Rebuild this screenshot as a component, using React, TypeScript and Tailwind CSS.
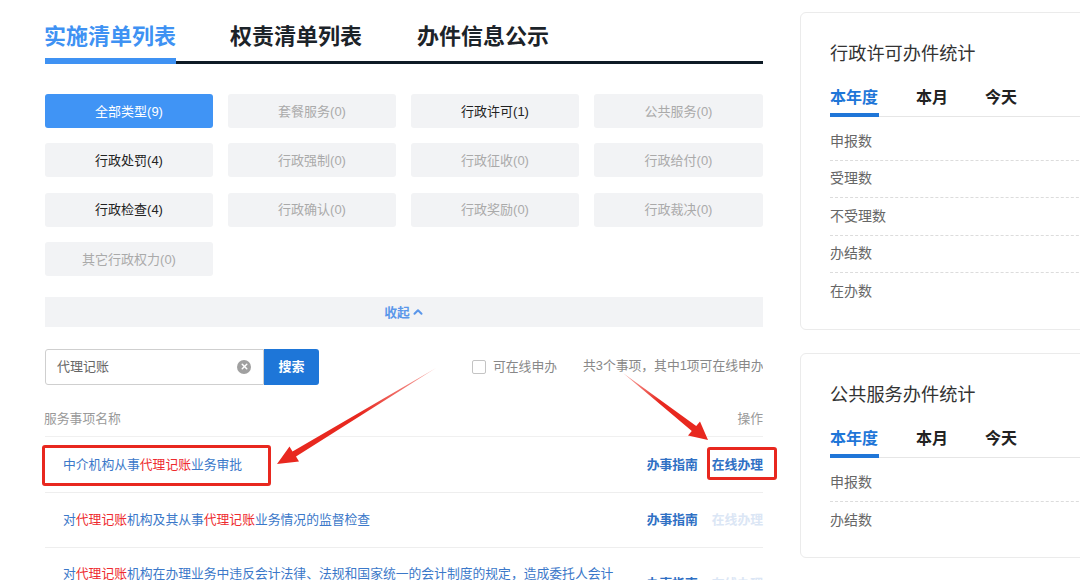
import React from "react";
import { ChevronUp, X } from "lucide-react";

const types = [
  { label: "全部类型(9)", state: "active" },
  { label: "套餐服务(0)", state: "off" },
  { label: "行政许可(1)", state: "on" },
  { label: "公共服务(0)", state: "off" },
  { label: "行政处罚(4)", state: "on" },
  { label: "行政强制(0)", state: "off" },
  { label: "行政征收(0)", state: "off" },
  { label: "行政给付(0)", state: "off" },
  { label: "行政检查(4)", state: "on" },
  { label: "行政确认(0)", state: "off" },
  { label: "行政奖励(0)", state: "off" },
  { label: "行政裁决(0)", state: "off" },
  { label: "其它行政权力(0)", state: "off" },
];

function Hl() {
  return <span className="text-[#ee2b2f]">代理记账</span>;
}

function Actions({ online }: { online?: boolean }) {
  return (
    <div className="ml-auto flex shrink-0 gap-[14px] text-[12.8px] font-bold">
      <span className="text-[#2f70c4]">办事指南</span>
      <span className={online ? "text-[#2f70c4]" : "text-[#dbe6f5]"}>在线办理</span>
    </div>
  );
}

function StatCard({ title, rows, className }: { title: string; rows: string[]; className: string }) {
  return (
    <div className={`w-[320px] rounded-[6px] border border-[#ebebeb] pl-[29px] pt-[27px] ${className}`}>
      <h2 className="text-[18.2px] leading-[28px] text-[#333]">{title}</h2>
      <div className="mt-[17px] flex h-[32px] border-b border-[#e6e6e6] pt-[1px] text-[16px] font-bold leading-[24px] text-[#222]">
        <span className="-mt-[1px] h-[32px] w-[49px] shrink-0 border-b-[4px] border-[#1f76d8] pt-[1px] text-[#1f76d8]">本年度</span>
        <span className="ml-[37px]">本月</span>
        <span className="ml-[37px]">今天</span>
      </div>
      <div className="mt-[6px]">
        {rows.map((r, i) => (
          <div
            key={r}
            className={`flex h-[37.5px] items-center text-[14px] text-[#666] ${
              i < rows.length - 1 ? "border-b border-dashed border-[#dcdcdc]" : ""
            }`}
          >
            {r}
          </div>
        ))}
      </div>
    </div>
  );
}

export default function App() {
  return (
    <div
      className="relative flex h-[580px] w-[1080px] overflow-hidden bg-white"
      style={{ fontFamily: '"Liberation Sans", "Noto Sans CJK SC", sans-serif' }}
    >
      {/* 左侧列表 */}
      <div className="ml-[45px] w-[718px] shrink-0">
        <div className="flex h-[64px] border-b-[3px] border-[#0e1b26] text-[22px] font-bold leading-[30px] text-[#1c2329]">
          <div className="-mb-[3px] h-[64px] w-[131px] whitespace-nowrap border-b-[6px] border-[#3f92f3] pt-[22px] indent-[-1px] text-[#3f92f3]">
            实施清单列表
          </div>
          <div className="ml-[54px] whitespace-nowrap pt-[22px]">权责清单列表</div>
          <div className="ml-[55px] whitespace-nowrap pt-[22px]">办件信息公示</div>
        </div>

        <div className="mt-[30px] grid grid-cols-[168px_168px_168px_169px] gap-x-[15px] gap-y-[15.3px]">
          {types.map((t) => (
            <div
              key={t.label}
              className={`flex h-[34px] items-center justify-center rounded-[3px] pt-[1px] text-[13px] ${
                t.state === "active"
                  ? "bg-[#4094f5] text-white"
                  : t.state === "on"
                    ? "bg-[#f2f3f5] text-[#222]"
                    : "bg-[#f2f3f5] text-[#aaa]"
              }`}
            >
              {t.label}
            </div>
          ))}
        </div>

        <div className="mt-[21px] flex h-[30px] items-center justify-center gap-[1px] bg-[#f2f3f5] pl-[1px] pt-[1px] text-[12.8px] font-bold text-[#5b97ea]">
          收起
          <ChevronUp size={14} strokeWidth={3.5} />
        </div>

        <div className="mt-[22px] flex h-[36px] items-center">
          <div className="flex h-[36px] w-[219px] items-center justify-between rounded-l-[3px] border border-[#cfcfcf] pl-[11px] pr-[12px] text-[13px] text-[#666]">
            代理记账
            <span className="flex h-[14px] w-[14px] items-center justify-center rounded-full bg-[#a0a0a0]">
              <X size={9} strokeWidth={4} color="#fff" />
            </span>
          </div>
          <div className="flex h-[36px] w-[55px] items-center justify-center rounded-r-[3px] bg-[#1e76d8] text-[13px] font-bold text-white">
            搜索
          </div>
          <span className="ml-[153px] h-[14px] w-[14px] rounded-[2px] border border-[#c4c4c4]" />
          <span className="ml-[7px] text-[12.8px] text-[#888]">可在线申办</span>
          <div className="ml-auto w-[180px] overflow-hidden whitespace-nowrap pb-[3px] text-[12.8px] text-[#888]">
            共3个事项，其中1项可在线申办
          </div>
        </div>

        <div className="mt-[15px] flex h-[37px] items-center border-b border-[#f0f0f0] pt-[1px] text-[12.8px] text-[#999]">
          <span className="-ml-[1px]">服务事项名称</span>
          <span className="ml-auto">操作</span>
        </div>
        <div className="flex h-[56px] items-center border-b border-[#eeeeee] pl-[18px] text-[12.8px] text-[#3b78c9]">
          <span>
            中介机构从事
            <Hl />
            业务审批
          </span>
          <Actions online />
        </div>
        <div className="flex h-[55px] items-center border-b border-[#eeeeee] pl-[18px] text-[12.8px] text-[#3b78c9]">
          <span>
            对<Hl />
            机构及其从事
            <Hl />
            业务情况的监督检查
          </span>
          <Actions />
        </div>
        <div className="flex h-[72px] items-center pl-[18px] text-[12.8px] text-[#3b78c9]">
          <span className="self-start whitespace-nowrap pt-[16px]">
            对<Hl />
            机构在办理业务中违反会计法律、法规和国家统一的会计制度的规定，造成委托人会计
          </span>
          <Actions />
        </div>
      </div>

      {/* 右侧统计 */}
      <div className="ml-[37px] shrink-0 pt-[12px]">
        <StatCard title="行政许可办件统计" rows={["申报数", "受理数", "不受理数", "办结数", "在办数"]} className="h-[318px]" />
        <StatCard title="公共服务办件统计" rows={["申报数", "办结数"]} className="mt-[23px] h-[205px]" />
      </div>

      {/* 标注：红框和箭头 */}
      <div className="absolute left-[42px] top-[445px] h-[41px] w-[229px] rounded-[3px] border-[3px] border-[#e8281f]" />
      <div className="absolute left-[707px] top-[447px] h-[33px] w-[70px] rounded-[3px] border-[3px] border-[#e8281f]" />
      <svg className="pointer-events-none absolute left-0 top-0" width="1080" height="580">
        <defs>
          <linearGradient id="a1" gradientUnits="userSpaceOnUse" x1="436" y1="368" x2="360" y2="414">
            <stop offset="0" stopColor="#f7b0ac" />
            <stop offset="1" stopColor="#e8281f" />
          </linearGradient>
          <linearGradient id="a2" gradientUnits="userSpaceOnUse" x1="623" y1="373" x2="660" y2="402">
            <stop offset="0" stopColor="#f7b0ac" />
            <stop offset="1" stopColor="#e8281f" />
          </linearGradient>
        </defs>
        <polygon fill="url(#a1)" points="436,368 296,456.5 299,461.5 277,464 289.5,446.5 292.5,451.5" />
        <polygon fill="url(#a2)" points="623,373 696.2,426 700,421.5 708,440 688,435.5 691.8,431" />
      </svg>
    </div>
  );
}
